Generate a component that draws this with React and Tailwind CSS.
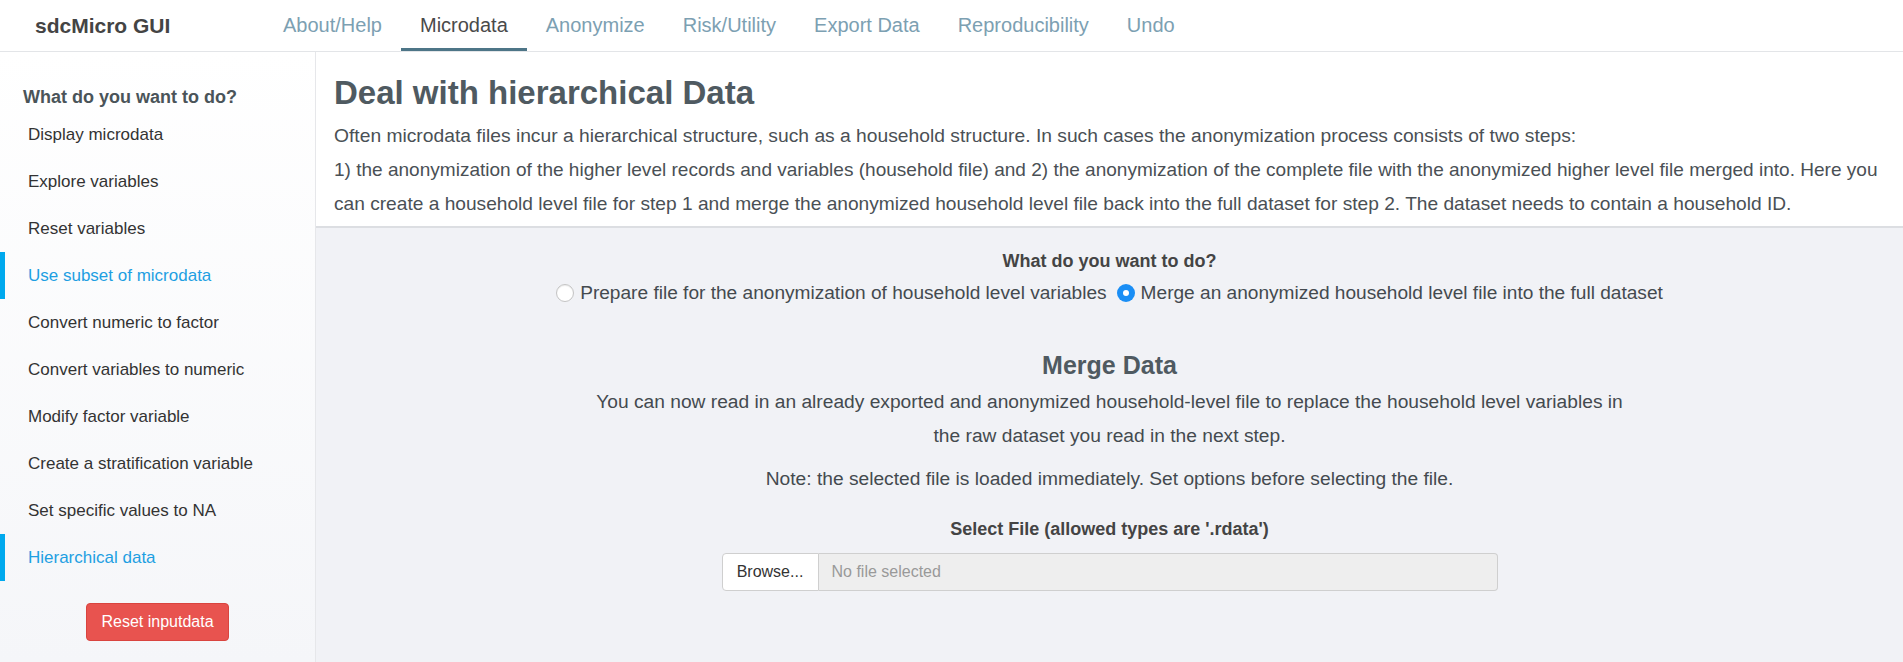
import React from 'react';

const tabs = ['About/Help', 'Microdata', 'Anonymize', 'Risk/Utility', 'Export Data', 'Reproducibility', 'Undo'];

const menu = [
  'Display microdata',
  'Explore variables',
  'Reset variables',
  'Use subset of microdata',
  'Convert numeric to factor',
  'Convert variables to numeric',
  'Modify factor variable',
  'Create a stratification variable',
  'Set specific values to NA',
  'Hierarchical data',
];

const active = ['Use subset of microdata', 'Hierarchical data'];

const Radio = ({ checked, label }) => (
  <label className="flex items-center gap-[6px]">
    {checked ? (
      <span className="w-[18px] h-[18px] rounded-full bg-[#1a8ef5] flex items-center justify-center">
        <span className="w-[6px] h-[6px] rounded-full bg-white" />
      </span>
    ) : (
      <span className="w-[18px] h-[18px] rounded-full bg-white border border-[#c4c4c4] shadow-[inset_0_1px_1px_rgba(0,0,0,0.08)]" />
    )}
    <span>{label}</span>
  </label>
);

export default function App() {
  return (
    <div className="h-[662px] flex flex-col font-['Liberation_Sans',Arial,sans-serif] text-[#333] overflow-hidden">
      {/* Navbar */}
      <nav className="h-[52px] flex border-b border-[#e3e5e8] bg-white shrink-0">
        <div className="w-[264px] pl-[35px] flex items-center text-[21px] font-bold text-[#444]">
          sdcMicro GUI
        </div>
        <ul className="flex">
          {tabs.map((t) => (
            <li
              key={t}
              className={
                t === 'Microdata'
                  ? 'px-[19px] flex items-center text-[20px] text-[#4a4a4a] border-b-[3px] border-[#4d7587] pt-[2px]'
                  : 'px-[19px] flex items-center text-[20px] text-[#7ca0b2] border-b-[3px] border-transparent pt-[2px]'
              }
            >
              {t}
            </li>
          ))}
        </ul>
      </nav>

      <div className="flex flex-1 min-h-0">
        {/* Sidebar */}
        <aside className="w-[316px] shrink-0 border-r border-[#e6e7ea] bg-gradient-to-b from-white to-[#f5f6f9] pt-[33px]">
          <h4 className="pl-[23px] text-[18px] font-bold text-[#4a5459] leading-[24px] mb-[2px]">
            What do you want to do?
          </h4>
          <ul>
            {menu.map((m) => (
              <li
                key={m}
                className={
                  active.includes(m)
                    ? 'h-[47px] flex items-center pl-[23px] border-l-[5px] border-[#00a9ee] text-[17px] text-[#1e9fe2]'
                    : 'h-[47px] flex items-center pl-[28px] text-[17px] text-[#333]'
                }
              >
                {m}
              </li>
            ))}
          </ul>
          <div className="flex justify-center mt-[22px]">
            <button className="w-[143px] h-[38px] rounded-[4px] bg-[#e8534f] border border-[#d9443f] text-white text-[16px]">
              Reset inputdata
            </button>
          </div>
        </aside>

        {/* Main */}
        <main className="flex-1 flex flex-col min-w-0">
          <section className="bg-white border-b-[2px] border-[#dcdee2] pl-[18px] pt-[21px] pb-[5px] text-[#4a5055]">
            <h2 className="text-[33px] font-bold leading-[40px] text-[#4f5a61] mb-[6px]">
              Deal with hierarchical Data
            </h2>
            <div className="leading-[34px]">
              <p className="whitespace-nowrap text-[19.25px]">
                Often microdata files incur a hierarchical structure, such as a household structure. In such cases the anonymization process consists of two steps:
              </p>
              <p className="whitespace-nowrap text-[19.05px]">
                1) the anonymization of the higher level records and variables (household file) and 2) the anonymization of the complete file with the anonymized higher level file merged into. Here you
              </p>
              <p className="whitespace-nowrap text-[19.15px]">
                can create a household level file for step 1 and merge the anonymized household level file back into the full dataset for step 2. The dataset needs to contain a household ID.
              </p>
            </div>
          </section>

          <section className="flex-1 bg-[#f1f2f6] flex flex-col items-center pt-[21px] text-[#444a4f]">
            <div className="text-[18px] font-bold leading-[24px] text-[#444]">What do you want to do?</div>
            <div className="flex gap-[10px] mt-[8px] text-[19.1px] leading-[24px]">
              <Radio label="Prepare file for the anonymization of household level variables" />
              <Radio checked label="Merge an anonymized household level file into the full dataset" />
            </div>

            <h3 className="mt-[45px] text-[25px] font-bold leading-[30px] text-[#4f5a61]">Merge Data</h3>
            <p className="mt-[5px] text-[19.2px] leading-[34px] text-center">
              You can now read in an already exported and anonymized household-level file to replace the household level variables in
              <br />
              the raw dataset you read in the next step.
            </p>
            <p className="mt-[9px] text-[19.2px] leading-[34px] text-center">
              Note: the selected file is loaded immediately. Set options before selecting the file.
            </p>

            <div className="mt-[21px] text-[18px] font-bold leading-[24px] text-[#444]">
              Select File (allowed types are '.rdata')
            </div>
            <div className="mt-[12px] w-[776px] h-[38px] flex text-[16px]">
              <button className="w-[97px] h-full bg-white border border-[#cfcfcf] rounded-l-[4px] text-[#333]">
                Browse...
              </button>
              <div className="flex-1 h-full bg-[#eeeeee] border border-l-0 border-[#cfcfcf] rounded-r-[4px] flex items-center pl-[13px] text-[#999]">
                No file selected
              </div>
            </div>
          </section>
        </main>
      </div>
    </div>
  );
}
